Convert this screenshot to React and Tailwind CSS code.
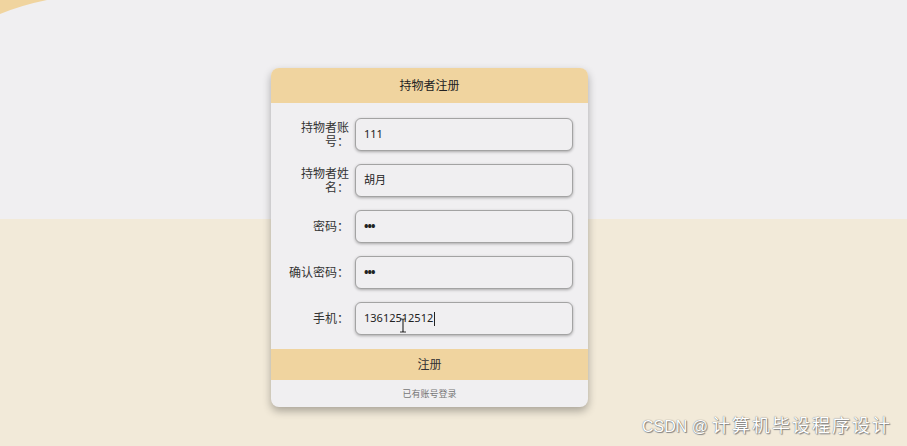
import React from 'react';

const fields = [
  { label: '持物者账号：', value: '111' },
  { label: '持物者姓名：', value: '胡月' },
  { label: '密码：', value: '•••', secret: true },
  { label: '确认密码：', value: '•••', secret: true },
  { label: '手机：', value: '13612512512', caret: true },
];

const App = () => {
  return (
    <div
      className="relative w-[907px] h-[446px] overflow-hidden bg-[linear-gradient(to_bottom,#f0eff1_219px,#f2ead9_219px)] pt-[68px] pl-[271px]"
      style={{ fontFamily: '"Noto Sans", "Noto Sans CJK SC", sans-serif' }}
    >
      <svg className="absolute left-0 top-0" width="60" height="20" viewBox="0 0 60 20">
        <path d="M0 0 H47 Q22 5 0 14 Z" fill="#f0d49f" />
      </svg>

      <div className="w-[317px] rounded-[8px] bg-[#f0eff1] shadow-[0_4px_8px_rgba(0,0,0,0.3)] overflow-hidden">
        <div className="h-[35px] bg-[#f0d49f] flex items-center justify-center text-[12px] text-[#222]">
          持物者注册
        </div>

        <div className="flex flex-col gap-[13px] pt-[15px] pl-[16px] pr-[15px]">
          {fields.map((f) => (
            <div key={f.label} className="flex items-center gap-[6px] h-[33px]">
              <div className="w-[62px] text-right text-[12px] leading-[14px] text-[#333]">{f.label}</div>
              <div className="relative w-[218px] h-[33px] rounded-[6px] border border-[#a3a3a3] bg-[#f0eff1] shadow-[0_1px_3px_rgba(0,0,0,0.3)] flex items-center pl-[8px] text-[11px] text-[#222]">
                {f.secret ? (
                  <span className="text-[12px] tracking-[-1px] font-bold">{f.value}</span>
                ) : (
                  <span>{f.value}</span>
                )}
                {f.caret && (
                  <>
                    <span className="ml-[1px] w-px h-[14px] bg-[#222]" />
                    <svg className="absolute left-[43px] top-[15px]" width="8" height="15" viewBox="0 0 8 15">
                      <path d="M1 1 H3 Q4 1 4 2.5 V12.5 Q4 14 3 14 H1 M7 1 H5 Q4 1 4 2.5 M4 12.5 Q4 14 5 14 H7" fill="none" stroke="#333" strokeWidth="1.2" />
                    </svg>
                  </>
                )}
              </div>
            </div>
          ))}
        </div>

        <div className="mt-[14px] h-[31px] bg-[#f0d49f] flex items-center justify-center text-[12px] text-[#333]">
          注册
        </div>
        <div className="h-[27px] flex items-center justify-center text-[9px] text-[#777]">
          已有账号登录
        </div>
      </div>

      <div className="absolute right-[15px] bottom-[7px] flex items-baseline text-white [text-shadow:0_0_1px_#555,1px_1px_1px_#888]">
        <span className="text-[16px] mr-[4px]" style={{ fontFamily: '"Liberation Sans", sans-serif' }}>CSDN @</span>
        <span className="text-[18px] tracking-[2px]">计算机毕设程序设计</span>
      </div>
    </div>
  );
};

export default App;
